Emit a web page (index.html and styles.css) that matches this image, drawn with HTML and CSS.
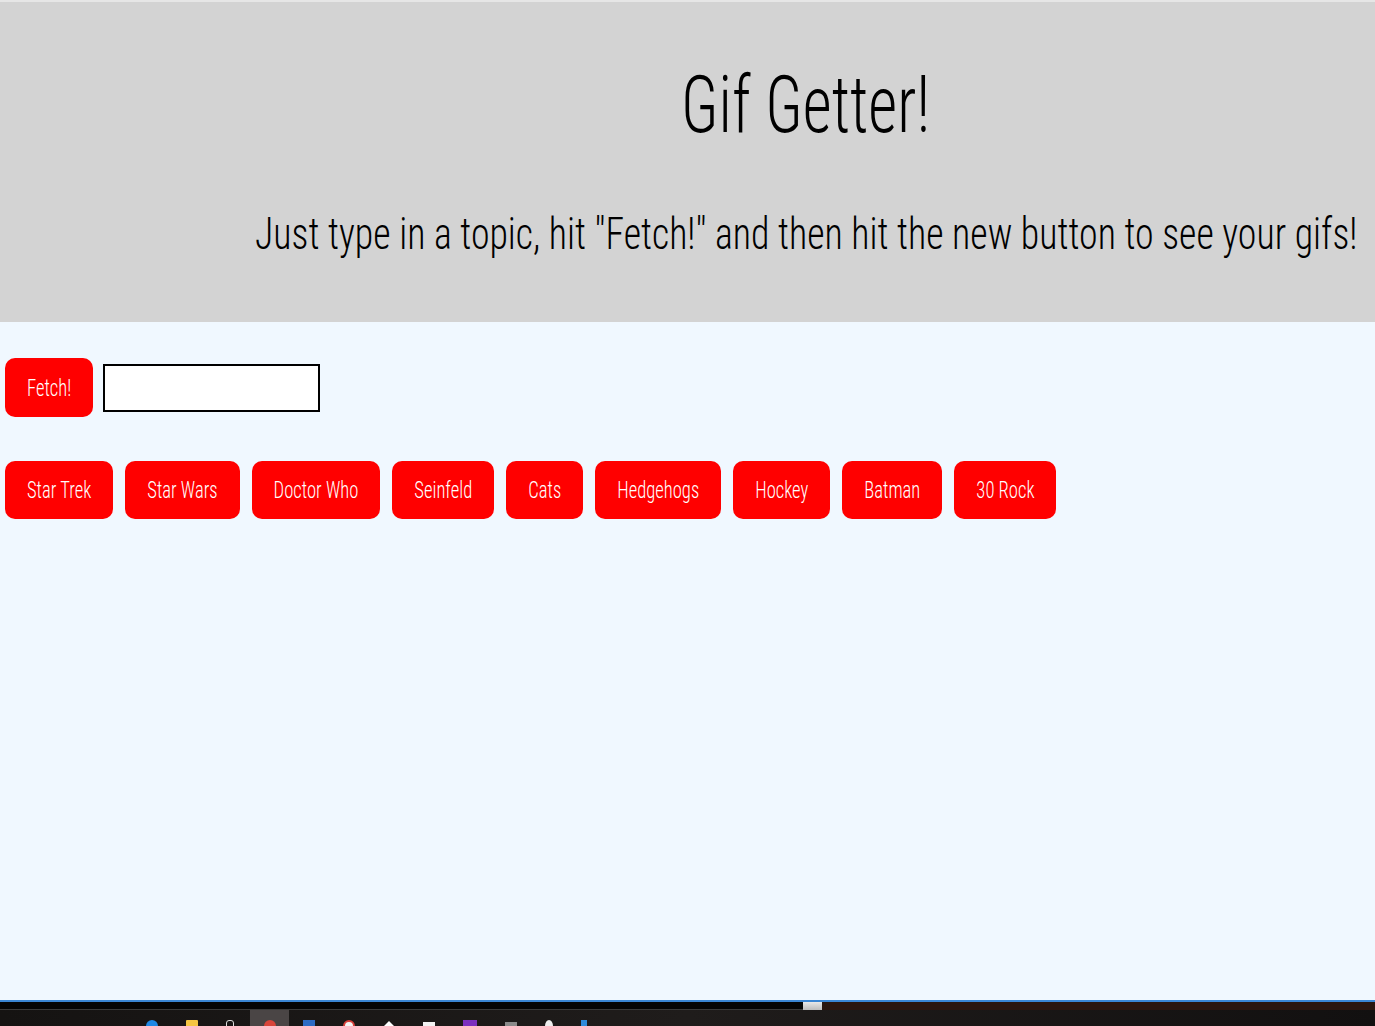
FILE: index.html
```html
<!DOCTYPE html>
<html lang="en">
<head>
<meta charset="utf-8">
<title>Gif Getter!</title>
<link rel="stylesheet" href="styles.css">
</head>
<body>
  <header class="hero">
    <h1 class="hero-title"><span class="narrow">Gif Getter!</span></h1>
    <p class="hero-sub"><span class="narrow narrow-sub">Just type in a topic, hit "Fetch!" and then hit the new button to see your gifs!</span></p>
  </header>
  <main class="content">
    <form class="search-row">
      <button type="button" class="btn btn-fetch"><span class="tall">Fetch!</span></button>
      <input type="text" class="topic-input">
    </form>
    <div class="topics">
      <button type="button" class="btn"><span class="tall">Star Trek</span></button>
      <button type="button" class="btn"><span class="tall">Star Wars</span></button>
      <button type="button" class="btn"><span class="tall">Doctor Who</span></button>
      <button type="button" class="btn"><span class="tall">Seinfeld</span></button>
      <button type="button" class="btn"><span class="tall">Cats</span></button>
      <button type="button" class="btn"><span class="tall">Hedgehogs</span></button>
      <button type="button" class="btn"><span class="tall">Hockey</span></button>
      <button type="button" class="btn"><span class="tall">Batman</span></button>
      <button type="button" class="btn"><span class="tall">30 Rock</span></button>
    </div>
  </main>
  <div class="taskbar">
    <div class="taskbar-strip">
      <span class="strip-dark"></span>
      <span class="strip-thumb"></span>
      <span class="strip-brown"></span>
    </div>
    <div class="taskbar-icons">
      <span class="ti ti-blue-circle"></span>
      <span class="ti ti-folder"></span>
      <span class="ti ti-pen"></span>
      <span class="ti-active"><span class="ti ti-red-circle"></span></span>
      <span class="ti ti-blue"></span>
      <span class="ti ti-redwhite"></span>
      <span class="ti ti-white-tri"></span>
      <span class="ti ti-white-rect"></span>
      <span class="ti ti-purple"></span>
      <span class="ti ti-grey"></span>
      <span class="ti ti-white-dot"></span>
      <span class="ti ti-blue-small"></span>
    </div>
  </div>
</body>
</html>
```

FILE: styles.css
```css
html, body {
  margin: 0;
  padding: 0;
}

body {
  background: #f0f8ff;
  font-family: "Roboto Condensed", "Roboto", sans-serif;
  font-weight: 300;
  min-height: 1026px;
  overflow: hidden;
}

.hero {
  background: #d3d3d3;
  border-top: 2px solid #e6e6e6;
  padding: 56px 0 0 237px;
  height: 264px;
  color: #000;
  overflow: hidden;
}

.hero-title,
.hero-sub {
  display: flex;
  justify-content: center;
  white-space: nowrap;
}

.narrow {
  display: inline-block;
  transform: scaleX(0.79);
  transform-origin: center;
}

.narrow-sub {
  transform: scaleX(0.845);
}

.hero-title {
  margin: 0;
  font-size: 80px;
  font-weight: 300;
  line-height: 94px;
}

.hero-sub {
  margin: 56px 0 0;
  font-size: 44.8px;
  line-height: 52px;
}

.content {
  padding: 36px 0 0 5px;
}

.search-row {
  display: flex;
  align-items: center;
  gap: 10px;
  margin: 0;
}

.btn {
  background: #ff0000;
  color: #fff;
  border: none;
  border-radius: 10px;
  height: 58px;
  padding: 0 22px;
  font-family: inherit;
  font-weight: 300;
  font-size: 18.6px;
  white-space: nowrap;
  cursor: pointer;
}

.tall {
  display: inline-block;
  transform: scaleY(1.29);
  transform-origin: center;
}

.btn-fetch {
  height: 59px;
}

.topic-input {
  width: 217px;
  height: 48px;
  box-sizing: border-box;
  border: 2px solid #000;
  background: #fff;
  padding: 0 4px;
  margin: 0;
}

.topics {
  display: flex;
  gap: 12px;
  margin-top: 44px;
}

.taskbar {
  position: fixed;
  left: 0;
  right: 0;
  bottom: 0;
  height: 24px;
  border-top: 2px solid #3a86d4;
  background: #151312;
  overflow: hidden;
}

.taskbar-strip {
  display: flex;
  height: 8px;
}

.strip-dark {
  width: 803px;
  background: #050505;
  border-bottom: 1px solid #3a3a3a;
}

.strip-thumb {
  width: 19px;
  background: linear-gradient(#e8e8e8, #bcbcbc);
}

.strip-brown {
  flex: 1;
  background: #2a160f;
}

.taskbar-icons {
  display: flex;
  align-items: flex-start;
  height: 16px;
  padding-left: 132px;
  background: linear-gradient(90deg, #151312 0%, #1f1c1b 50%, #121010 100%);
}

.ti {
  display: block;
  width: 12px;
  height: 12px;
  margin: 10px 14px 0;
}

.ti-active {
  display: block;
  width: 39px;
  height: 16px;
  background: #4a4545;
  margin: 0 0 0 2px;
}

.ti-active .ti {
  margin: 10px auto 0;
}

.ti-blue-circle { background: #1e88e5; border-radius: 50%; }
.ti-folder { background: #f4c542; border-radius: 1px; }
.ti-pen { width: 6px; border: 1px solid #ddd; border-radius: 3px 3px 0 0; background: transparent; }
.ti-red-circle { background: #d9453a; border-radius: 50%; }
.ti-blue { background: #2d6bc4; }
.ti-redwhite { background: #f4f4f4; border: 2px solid #d8403a; border-radius: 50%; box-sizing: border-box; }
.ti-white-tri { width: 0; height: 0; border-left: 6px solid transparent; border-right: 6px solid transparent; border-bottom: 6px solid #fff; margin-top: 11px; }
.ti-white-rect { background: #f2f2f2; height: 10px; margin-top: 12px; }
.ti-purple { background: #7b2fbf; width: 14px; }
.ti-grey { background: #8a8a8a; height: 10px; margin-top: 12px; }
.ti-white-dot { background: #eee; border-radius: 50%; width: 8px; }
.ti-blue-small { background: #2f8ad9; width: 6px; }
```
